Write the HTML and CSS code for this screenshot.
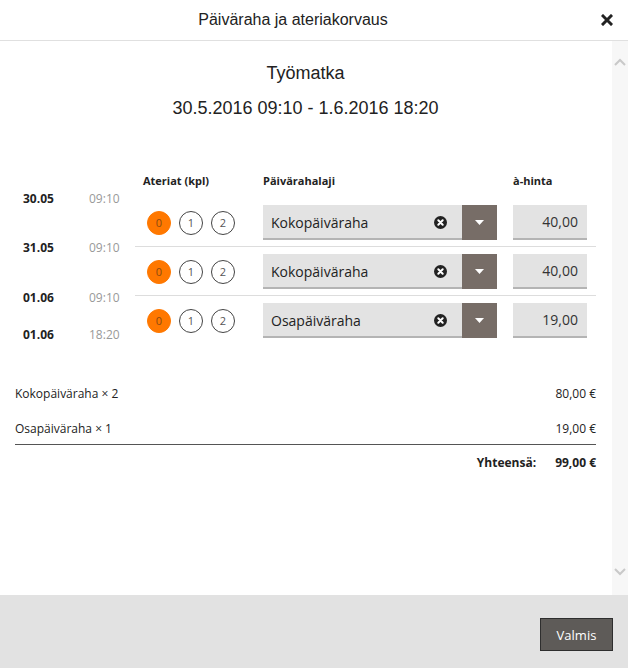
FILE: index.html
```html
<!DOCTYPE html>
<html lang="fi">
<head>
<meta charset="utf-8">
<title>Päiväraha ja ateriakorvaus</title>
<link rel="stylesheet" href="styles.css">
</head>
<body>
<div class="dialog">
  <header class="dlg-head">
    <h1 class="dlg-title">Päiväraha ja ateriakorvaus</h1>
    <button class="close" aria-label="Sulje">
      <svg width="12" height="12" viewBox="0 0 12 12"><path d="M2 2 L10 10 M10 2 L2 10" stroke="#222" stroke-width="3" stroke-linecap="square"/></svg>
    </button>
  </header>

  <div class="dlg-body">
    <div class="content">
      <h2 class="trip-title">Työmatka</h2>
      <p class="trip-dates">30.5.2016 09:10 - 1.6.2016 18:20</p>

      <div class="allowance">
        <ul class="timeline">
          <li class="tl-item t1"><b>30.05</b><span>09:10</span></li>
          <li class="tl-item t2"><b>31.05</b><span>09:10</span></li>
          <li class="tl-item t3"><b>01.06</b><span>09:10</span></li>
          <li class="tl-item t4"><b>01.06</b><span>18:20</span></li>
        </ul>

        <div class="table">
          <div class="thead">
            <div class="th th-meals">Ateriat (kpl)</div>
            <div class="th">Päivärahalaji</div>
            <div class="th">à-hinta</div>
          </div>

          <div class="row">
            <div class="meals"><span class="meal on">0</span><span class="meal">1</span><span class="meal">2</span></div>
            <div class="select">
              <span class="sel-text">Kokopäiväraha</span>
              <span class="clear"><svg width="13" height="13" viewBox="0 0 13 13"><circle cx="6.5" cy="6.5" r="6.5" fill="#222"/><path d="M4.3 4.3 L8.7 8.7 M8.7 4.3 L4.3 8.7" stroke="#fff" stroke-width="2" stroke-linecap="round"/></svg></span>
              <span class="dd"><svg width="9" height="5" viewBox="0 0 9 5"><path d="M0 0 H9 L4.5 5 Z" fill="#fff"/></svg></span>
            </div>
            <div class="price">40,00</div>
          </div>

          <div class="row">
            <div class="meals"><span class="meal on">0</span><span class="meal">1</span><span class="meal">2</span></div>
            <div class="select">
              <span class="sel-text">Kokopäiväraha</span>
              <span class="clear"><svg width="13" height="13" viewBox="0 0 13 13"><circle cx="6.5" cy="6.5" r="6.5" fill="#222"/><path d="M4.3 4.3 L8.7 8.7 M8.7 4.3 L4.3 8.7" stroke="#fff" stroke-width="2" stroke-linecap="round"/></svg></span>
              <span class="dd"><svg width="9" height="5" viewBox="0 0 9 5"><path d="M0 0 H9 L4.5 5 Z" fill="#fff"/></svg></span>
            </div>
            <div class="price">40,00</div>
          </div>

          <div class="row">
            <div class="meals"><span class="meal on">0</span><span class="meal">1</span><span class="meal">2</span></div>
            <div class="select">
              <span class="sel-text">Osapäiväraha</span>
              <span class="clear"><svg width="13" height="13" viewBox="0 0 13 13"><circle cx="6.5" cy="6.5" r="6.5" fill="#222"/><path d="M4.3 4.3 L8.7 8.7 M8.7 4.3 L4.3 8.7" stroke="#fff" stroke-width="2" stroke-linecap="round"/></svg></span>
              <span class="dd"><svg width="9" height="5" viewBox="0 0 9 5"><path d="M0 0 H9 L4.5 5 Z" fill="#fff"/></svg></span>
            </div>
            <div class="price">19,00</div>
          </div>
        </div>
      </div>

      <div class="summary">
        <div class="sum-lines">
          <div class="sum-line"><span>Kokopäiväraha × 2</span><span>80,00 €</span></div>
          <div class="sum-line"><span>Osapäiväraha × 1</span><span>19,00 €</span></div>
        </div>
        <div class="sum-total"><span class="tot-label">Yhteensä:</span><span class="tot-value">99,00 €</span></div>
      </div>
    </div>

    <div class="scrollbar">
      <svg width="12" height="8" viewBox="0 0 12 8"><path d="M1 7 L6 2 L11 7" fill="none" stroke="#c9c9c9" stroke-width="2"/></svg>
      <svg width="12" height="8" viewBox="0 0 12 8"><path d="M1 1 L6 6 L11 1" fill="none" stroke="#c9c9c9" stroke-width="2"/></svg>
    </div>
  </div>

  <footer class="dlg-foot">
    <button class="btn">Valmis</button>
  </footer>
</div>
</body>
</html>
```

FILE: styles.css
```css
* { box-sizing: border-box; }
html, body { margin: 0; padding: 0; }
body {
  width: 628px;
  height: 668px;
  overflow: hidden;
  background: #fff;
  font-family: "Open Sans", "Noto Sans", sans-serif;
  color: #222;
}
.dialog {
  display: flex;
  flex-direction: column;
  height: 668px;
}
.dlg-head {
  display: flex;
  align-items: center;
  height: 41px;
  border-bottom: 1px solid #e0e0e0;
  flex: none;
}
.dlg-title {
  flex: 1;
  margin: 0;
  text-align: center;
  font-family: "Liberation Sans", Arial, sans-serif;
  font-weight: normal;
  font-size: 16px;
  line-height: 40px;
  color: #222;
}
.close {
  width: 42px;
  height: 40px;
  border: 0;
  background: none;
  padding: 0;
  display: flex;
  align-items: center;
  justify-content: center;
}
.dlg-body {
  flex: 1;
  display: flex;
  min-height: 0;
}
.content {
  flex: 1;
  padding: 0 16px 0 15px;
}
.scrollbar {
  width: 16px;
  flex: none;
  background: #f7f7f7;
  display: flex;
  flex-direction: column;
  justify-content: space-between;
  align-items: center;
  padding: 17px 0 19px;
}
.trip-title {
  margin: 20px 0 0;
  text-align: center;
  font-family: "Liberation Sans", Arial, sans-serif;
  font-weight: normal;
  font-size: 18px;
  line-height: 24px;
}
.trip-dates {
  margin: 11px 0 0;
  text-align: center;
  font-family: "Liberation Sans", Arial, sans-serif;
  font-size: 18px;
  line-height: 24px;
}
.allowance {
  display: flex;
  margin-top: 53px;
}
.timeline {
  list-style: none;
  margin: 0;
  padding: 0;
  width: 120px;
  flex: none;
  font-size: 12px;
  line-height: 16px;
}
.tl-item {
  display: flex;
  padding-left: 8px;
}
.tl-item b {
  width: 66px;
  font-weight: bold;
  color: #222;
}
.tl-item span { color: #999; }
.t1 { margin-top: 18px; }
.t2 { margin-top: 33px; }
.t3 { margin-top: 34px; }
.t4 { margin-top: 21px; }

.table { flex: 1; }
.thead, .row {
  display: grid;
  grid-template-columns: 112px 234px 74px;
  column-gap: 16px;
}
.thead {
  font-size: 11px;
  font-weight: bold;
  line-height: 16px;
  margin-bottom: 9px;
}
.th-meals { padding-left: 8px; }
.row {
  padding: 7px 0 6px;
  align-items: center;
}
.row + .row { border-top: 1px solid #ddd; }
.meals {
  display: flex;
  gap: 8px;
  padding-left: 12px;
}
.meal {
  width: 24px;
  height: 24px;
  border-radius: 50%;
  border: 1px solid #444;
  display: flex;
  align-items: center;
  justify-content: center;
  font-size: 11px;
  color: #555;
}
.meal.on {
  background: #ff7800;
  border-color: #ff7800;
  color: #8a4a10;
}
.select {
  display: flex;
  align-items: center;
  height: 35px;
  background: #e3e3e3;
  box-shadow: inset 0 -2px 0 #b4b4b4;
}
.sel-text {
  flex: 1;
  padding-left: 8px;
  font-size: 14px;
  color: #222;
}
.clear {
  display: flex;
  width: 29px;
  padding-left: 1px;
}
.dd {
  width: 35px;
  height: 35px;
  background: #776d67;
  display: flex;
  align-items: center;
  justify-content: center;
}
.price {
  height: 35px;
  background: #e3e3e3;
  box-shadow: inset 0 -2px 0 #b4b4b4;
  text-align: right;
  padding-right: 9px;
  font-size: 14px;
  line-height: 33px;
  color: #333;
}
.summary {
  margin-top: 41px;
  font-size: 12px;
  line-height: 17px;
}
.sum-lines {
  border-bottom: 1px solid #555;
  padding-bottom: 7px;
}
.sum-line {
  display: flex;
  justify-content: space-between;
}
.sum-line + .sum-line { margin-top: 18px; }
.sum-total {
  display: flex;
  justify-content: flex-end;
  padding-top: 9px;
  font-weight: bold;
}
.tot-label { margin-right: 19px; }
.dlg-foot {
  flex: none;
  height: 73px;
  background: #e2e2e2;
  display: flex;
  justify-content: flex-end;
  align-items: flex-start;
  padding: 23px 15px 0 0;
}
.btn {
  width: 73px;
  height: 33px;
  background: #5e5b58;
  border: 1px solid #2e2e2e;
  color: #fff;
  font-family: "Open Sans", "Noto Sans", sans-serif;
  font-size: 13px;
  padding: 0;
}
```
